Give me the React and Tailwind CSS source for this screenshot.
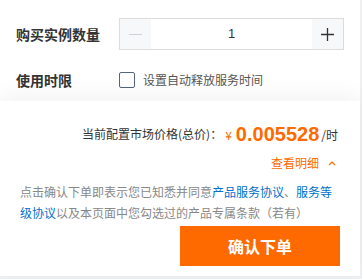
export default function App() {
  return (
    <div className="w-[362px] h-[279px] bg-[#eef0f3] font-['Noto_Sans_CJK_SC','Noto_Sans',sans-serif] text-[#333] overflow-hidden">
      <div className="w-[360px] h-[276px] bg-white flex flex-col">
        <section className="pt-[18px] pl-4 pr-4 h-[101px]">
          <div className="flex items-center h-8">
            <div className="w-[103px] text-[14px] font-bold leading-none">购买实例数量</div>
            <div className="flex w-[225px] h-8 border border-[#dcdcdc]">
              <button className="w-[31px] h-full bg-[#f7f8fa] flex items-center justify-center">
                <span className="block w-[13px] h-px bg-[#cfd2d6]" />
              </button>
              <div className="flex-1 flex items-center justify-center text-[13px] text-[#333] font-['Liberation_Sans',sans-serif]">1</div>
              <button className="w-[31px] h-full bg-[#f7f8fa] flex items-center justify-center">
                <svg width="15" height="15" viewBox="0 0 15 15">
                  <path d="M7.5 1v13M1 7.5h13" stroke="#333" strokeWidth="1.3" />
                </svg>
              </button>
            </div>
          </div>
          <div className="flex items-center h-4 mt-[22px]">
            <div className="w-[103px] text-[14px] font-bold leading-none">使用时限</div>
            <span className="w-4 h-4 border border-[#55667a] rounded-[2px] bg-white" />
            <span className="ml-2 text-[12px] text-[#555] leading-none">设置自动释放服务时间</span>
          </div>
        </section>
        <section className="flex-1 bg-white shadow-[0_-6px_22px_rgba(0,0,0,0.05)] pt-[21px] pl-5 pr-5 flex flex-col">
          <div className="flex items-center justify-end h-6 pr-[2px]">
            <span className="text-[12px] text-[#333]">当前配置市场价格(总价)：</span>
            <span className="text-[12px] text-[#ff6a00] ml-[3px] mt-[2px]">¥</span>
            <span className="text-[20px] font-bold text-[#ff6a00] font-['Liberation_Sans',sans-serif] ml-[4px] leading-none">0.005528</span>
            <span className="text-[12px] text-[#333] ml-[2px] mt-[2px]">/时</span>
          </div>
          <div className="flex items-center justify-end h-[18px] mt-2 pr-1">
            <span className="text-[12px] text-[#ff6a00]">查看明细</span>
            <svg className="ml-[9px]" width="8" height="6" viewBox="0 0 8 6">
              <polyline points="1,5 4,2 7,5" fill="none" stroke="#ff6a00" strokeWidth="1.2" />
            </svg>
          </div>
          <p className="mt-[9px] text-[12px] leading-[21px] text-[#888]">
            点击确认下单即表示您已知悉并同意<span className="text-[#0070cc]">产品服务协议</span>、<span className="text-[#0070cc]">服务等级协议</span>以及本页面中您勾选过的产品专属条款（若有）
          </p>
          <div className="flex justify-end mt-[3px]">
            <button className="w-40 h-10 bg-[#ff6a00] text-white text-[16px] font-bold">确认下单</button>
          </div>
        </section>
      </div>
    </div>
  )
}
